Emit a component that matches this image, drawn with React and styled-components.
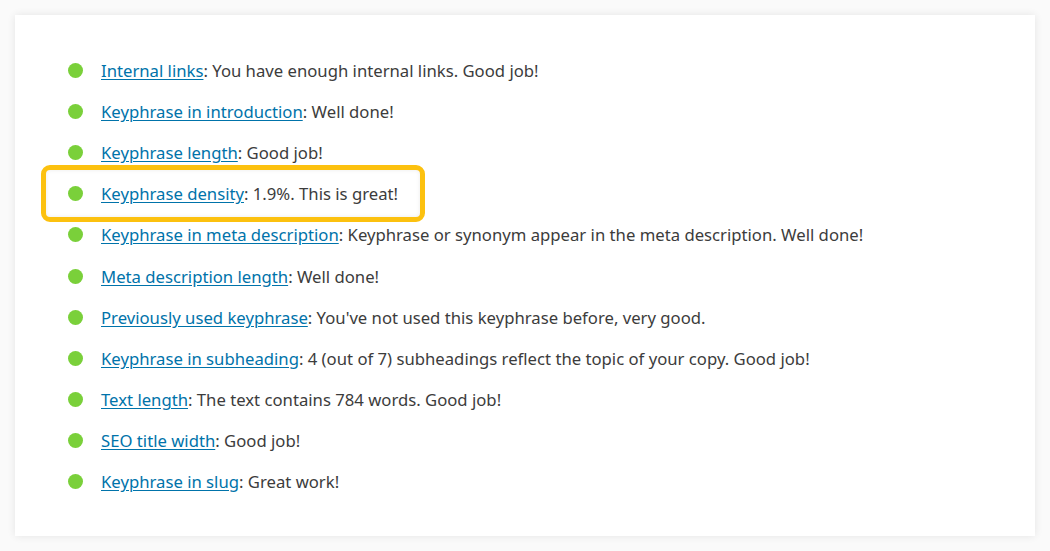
import React from "react";
import styled, { createGlobalStyle } from "styled-components";

const GlobalStyle = createGlobalStyle`
  html, body {
    margin: 0;
    padding: 0;
    background: #fafafa;
  }
  body {
    font-family: "Noto Sans", "Open Sans", sans-serif;
  }
`;

const Page = styled.div`
  padding: 15px;
  height: 551px;
  box-sizing: border-box;
`;

const Card = styled.div`
  background: #fff;
  height: 521px;
  box-sizing: border-box;
  padding: 35px 0 0 53px;
  box-shadow: 0 0 8px rgba(0, 0, 0, 0.09);
`;

const List = styled.ul`
  list-style: none;
  margin: 0;
  padding: 0;
  display: flex;
  flex-direction: column;
`;

const Item = styled.li`
  position: relative;
  display: flex;
  align-items: center;
  height: 41.1px;
  font-size: 16.7px;
  color: #3c3c3c;
  white-space: nowrap;

  ${(p) =>
    p.$highlight &&
    `
    &::after {
      content: "";
      position: absolute;
      left: -27px;
      top: -8px;
      width: 384px;
      height: 57px;
      box-sizing: border-box;
      border: 5px solid #fcc10f;
      border-radius: 9px;
      box-shadow: inset 0 0 4px rgba(0,0,0,0.08);
    }
  `}
`;

const Bullet = styled.span`
  width: 15px;
  height: 15px;
  border-radius: 50%;
  background: #7ad03a;
  flex: none;
  margin-right: 18px;
`;

const Link = styled.a`
  color: #0073aa;
  text-decoration: underline;
  text-underline-offset: 2px;
  cursor: pointer;
`;

const results = [
  ["Internal links", "You have enough internal links. Good job!"],
  ["Keyphrase in introduction", "Well done!"],
  ["Keyphrase length", "Good job!"],
  ["Keyphrase density", "1.9%. This is great!", true],
  ["Keyphrase in meta description", "Keyphrase or synonym appear in the meta description. Well done!"],
  ["Meta description length", "Well done!"],
  ["Previously used keyphrase", "You've not used this keyphrase before, very good."],
  ["Keyphrase in subheading", "4 (out of 7) subheadings reflect the topic of your copy. Good job!"],
  ["Text length", "The text contains 784 words. Good job!"],
  ["SEO title width", "Good job!"],
  ["Keyphrase in slug", "Great work!"],
];

export default function App() {
  return (
    <>
      <GlobalStyle />
      <Page>
        <Card>
          <List>
            {results.map(([label, text, hl]) => (
              <Item key={label} $highlight={hl}>
                <Bullet />
                <span>
                  <Link>{label}</Link>: {text}
                </span>
              </Item>
            ))}
          </List>
        </Card>
      </Page>
    </>
  );
}
